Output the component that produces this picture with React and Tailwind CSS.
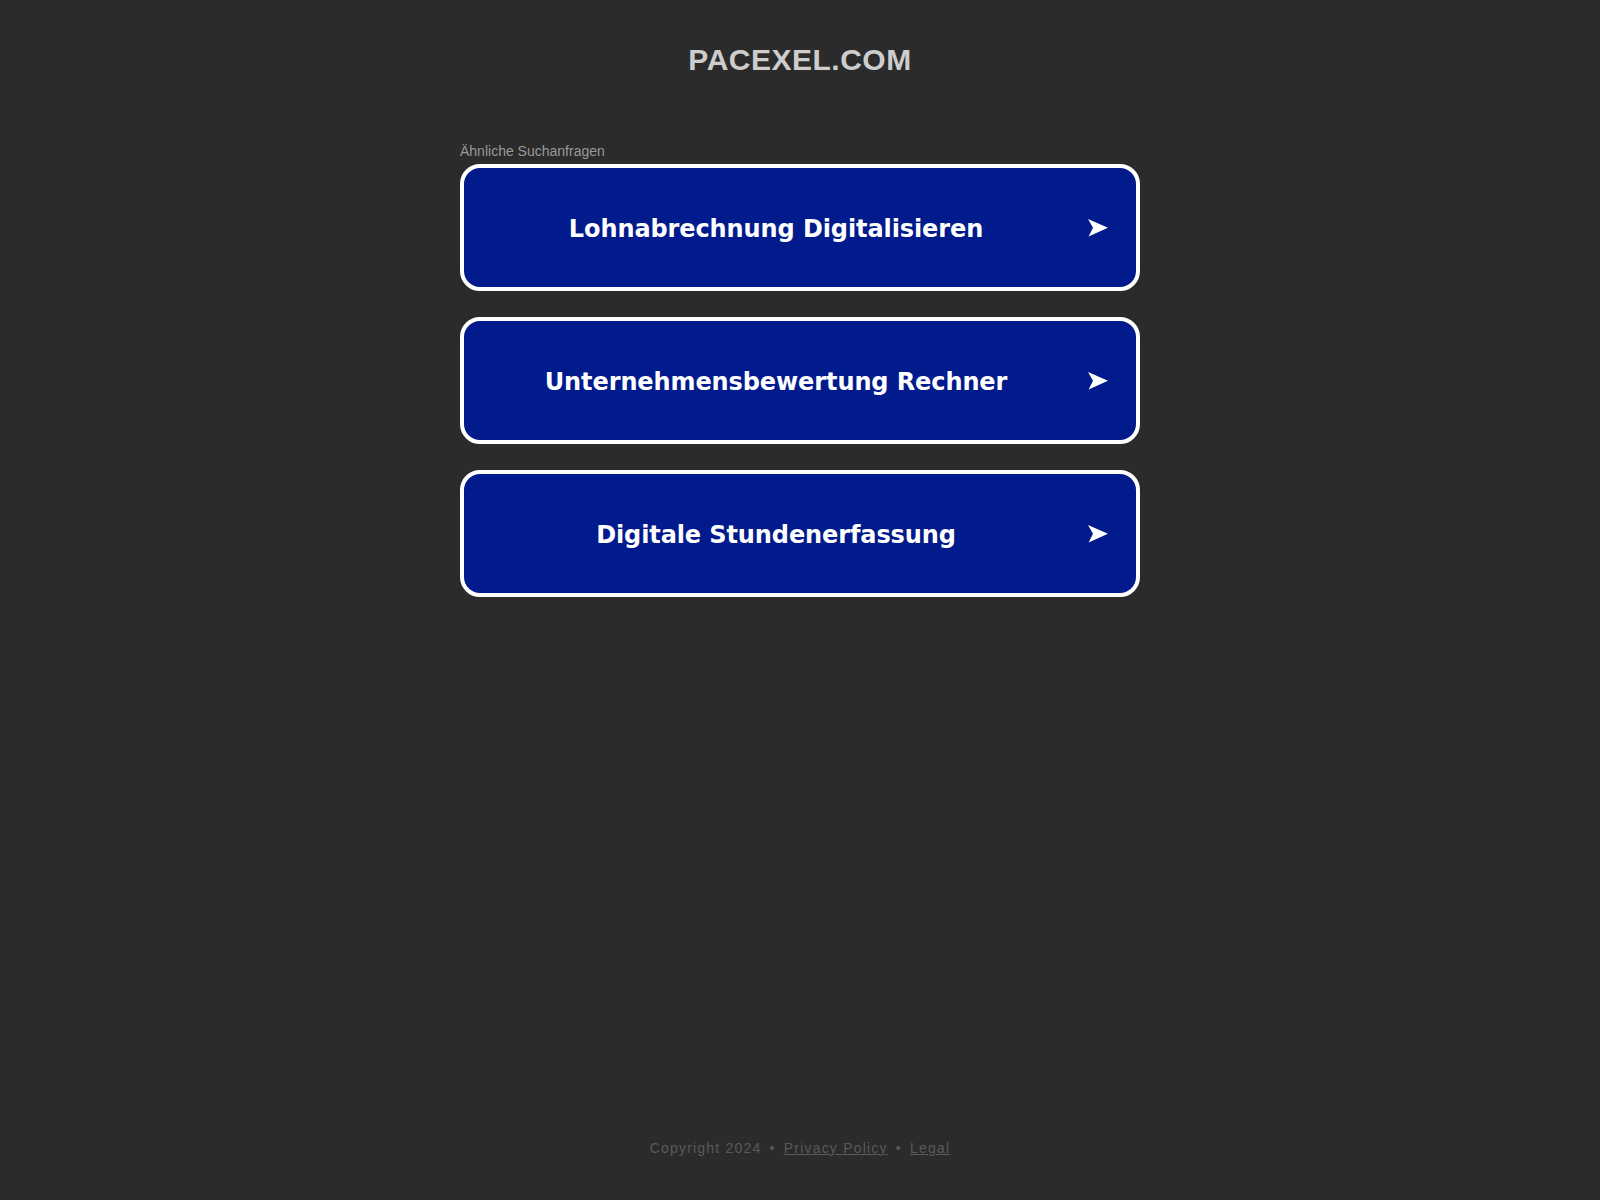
import React from "react";

const searches = [
  "Lohnabrechnung Digitalisieren",
  "Unternehmensbewertung Rechner",
  "Digitale Stundenerfassung",
];

const Arrow = () => (
  <svg width="20" height="18" viewBox="0 0 20 18" className="shrink-0">
    <path d="M0 0 L20 8.8 L0.6 17.6 L5 8.8 Z" fill="#ffffff" />
  </svg>
);

const SearchLink = ({ label }) => (
  <a
    href="#"
    className="flex items-center h-[127px] w-full rounded-[20px] border-4 border-white bg-[#011a8c] pr-[28px]"
  >
    <span
      className="flex-1 pt-[2px] text-center text-[24px] leading-[28px] font-bold tracking-[-0.1px] text-white"
      style={{ fontFamily: '"DejaVu Sans", Verdana, sans-serif' }}
    >
      {label}
    </span>
    <Arrow />
  </a>
);

export default function App() {
  return (
    <div
      className="flex h-screen flex-col bg-[#2b2b2b]"
      style={{ fontFamily: '"Liberation Sans", Arial, sans-serif' }}
    >
      <header className="pt-[43px] text-center">
        <h1 className="text-[30px] leading-[34px] font-bold tracking-[0.5px] text-[#cdcdcd]">
          PACEXEL.COM
        </h1>
      </header>

      <main className="mx-auto mt-[66px] w-[680px]">
        <p className="mb-[5px] text-[14px] leading-[16px] text-[#999999]">
          Ähnliche Suchanfragen
        </p>
        <div className="flex flex-col gap-[26px]">
          {searches.map((s) => (
            <SearchLink key={s} label={s} />
          ))}
        </div>
      </main>

      <footer className="mt-auto pb-[44px] text-center text-[14px] leading-[16px] tracking-[1.2px] text-[#5a5a5a]">
        Copyright 2024 <span className="mx-[3px]">&bull;</span>{" "}
        <a href="#" className="underline">
          Privacy Policy
        </a>{" "}
        <span className="mx-[3px]">&bull;</span>{" "}
        <a href="#" className="underline">
          Legal
        </a>
      </footer>
    </div>
  );
}
